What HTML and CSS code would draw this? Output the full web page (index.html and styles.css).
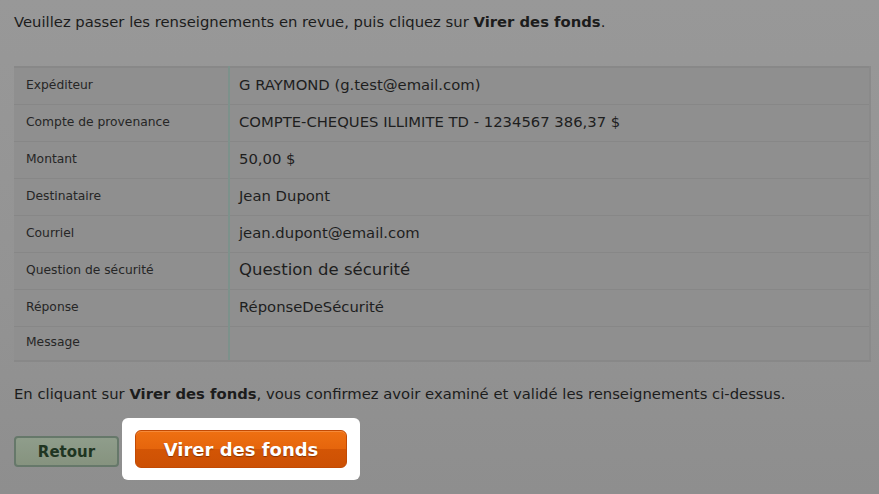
FILE: index.html
```html
<!DOCTYPE html>
<html>
  <head>
    <title>Virer des fonds</title>
    <link rel="stylesheet" href="styles.css">
  </head>
  <body>
    <p class="intro">Veuillez passer les renseignements en revue, puis cliquez sur <b>Virer des fonds</b>.</p>

    <table class="review">
      <tr><th>Expéditeur</th><td>G RAYMOND (g.test@email.com)</td></tr>
      <tr><th>Compte de provenance</th><td>COMPTE-CHEQUES ILLIMITE TD - 1234567 386,37 $</td></tr>
      <tr><th>Montant</th><td>50,00 $</td></tr>
      <tr><th>Destinataire</th><td>Jean Dupont</td></tr>
      <tr><th>Courriel</th><td>jean.dupont@email.com</td></tr>
      <tr><th>Question de sécurité</th><td class="big">Question de sécurité</td></tr>
      <tr><th>Réponse</th><td>RéponseDeSécurité</td></tr>
      <tr class="last"><th>Message</th><td></td></tr>
    </table>

    <p class="confirm">En cliquant sur <b>Virer des fonds</b>, vous confirmez avoir examiné et validé les renseignements ci-dessus.</p>

    <div class="actions">
      <button class="btn-back">Retour</button>
      <div class="spot">
        <button class="btn-go">Virer des fonds</button>
      </div>
    </div>
  </body>
</html>
```

FILE: styles.css
```css
html {
  height: 100%;
}
body {
  margin: 0;
  padding: 0 8px 0 14px;
  min-height: 100%;
  box-sizing: border-box;
  background: linear-gradient(180deg, #989898 0%, #939393 60%, #8e8e8e 100%);
  color: #1c1c1c;
  font-family: "DejaVu Sans", Verdana, sans-serif;
  font-size: 14.8px;
}
.intro {
  margin: 0;
  padding-top: 12px;
  line-height: 20px;
}
.intro b,
.confirm b {
  font-weight: bold;
}
.review {
  margin-top: 34px;
  width: 857px;
  border-collapse: collapse;
  background: #8f8f8f;
  border-top: 2px solid #888888;
  border-right: 2px solid #8a8a8a;
}
.review th,
.review td {
  height: 33px;
  padding: 0;
  border-bottom: 1px solid #878787;
  vertical-align: middle;
  text-align: left;
}
.review th {
  width: 202px;
  padding-left: 12px;
  padding-bottom: 3px;
  font-weight: normal;
  font-size: 12.3px;
  color: #262626;
  border-right: 2px solid #7d918b;
}
.review td {
  padding-left: 9px;
  padding-bottom: 3px;
  color: #1e1e1e;
}
.review td.big {
  font-size: 16.5px;
}
.review .last th,
.review .last td {
  height: 30px;
  border-bottom: 2px solid #888888;
}
.confirm {
  margin: 22px 0 0;
  line-height: 20px;
}
.actions {
  display: flex;
  align-items: flex-start;
  margin-top: 14px;
}
.btn-back {
  width: 105px;
  height: 31px;
  margin-top: 18px;
  background: linear-gradient(180deg, #8f9d8b, #86937f);
  border: 2px solid #66786a;
  border-radius: 4px;
  color: #1f3522;
  font-family: "DejaVu Sans", Verdana, sans-serif;
  font-size: 15px;
  font-weight: bold;
}
.spot {
  margin-left: 3px;
  padding: 12px 13px;
  background: #ffffff;
  border-radius: 6px;
}
.btn-go {
  display: block;
  width: 212px;
  height: 38px;
  background: linear-gradient(180deg, #ee7012 0%, #e5650c 50%, #d35505 51%, #cc5004 100%);
  border: 1px solid #c24a04;
  border-radius: 6px;
  box-shadow: inset 0 1px 0 #f58a3a;
  color: #ffffff;
  font-family: "DejaVu Sans", Verdana, sans-serif;
  font-size: 18px;
  font-weight: bold;
  text-shadow: 0 1px 1px #8a3300;
}
```
